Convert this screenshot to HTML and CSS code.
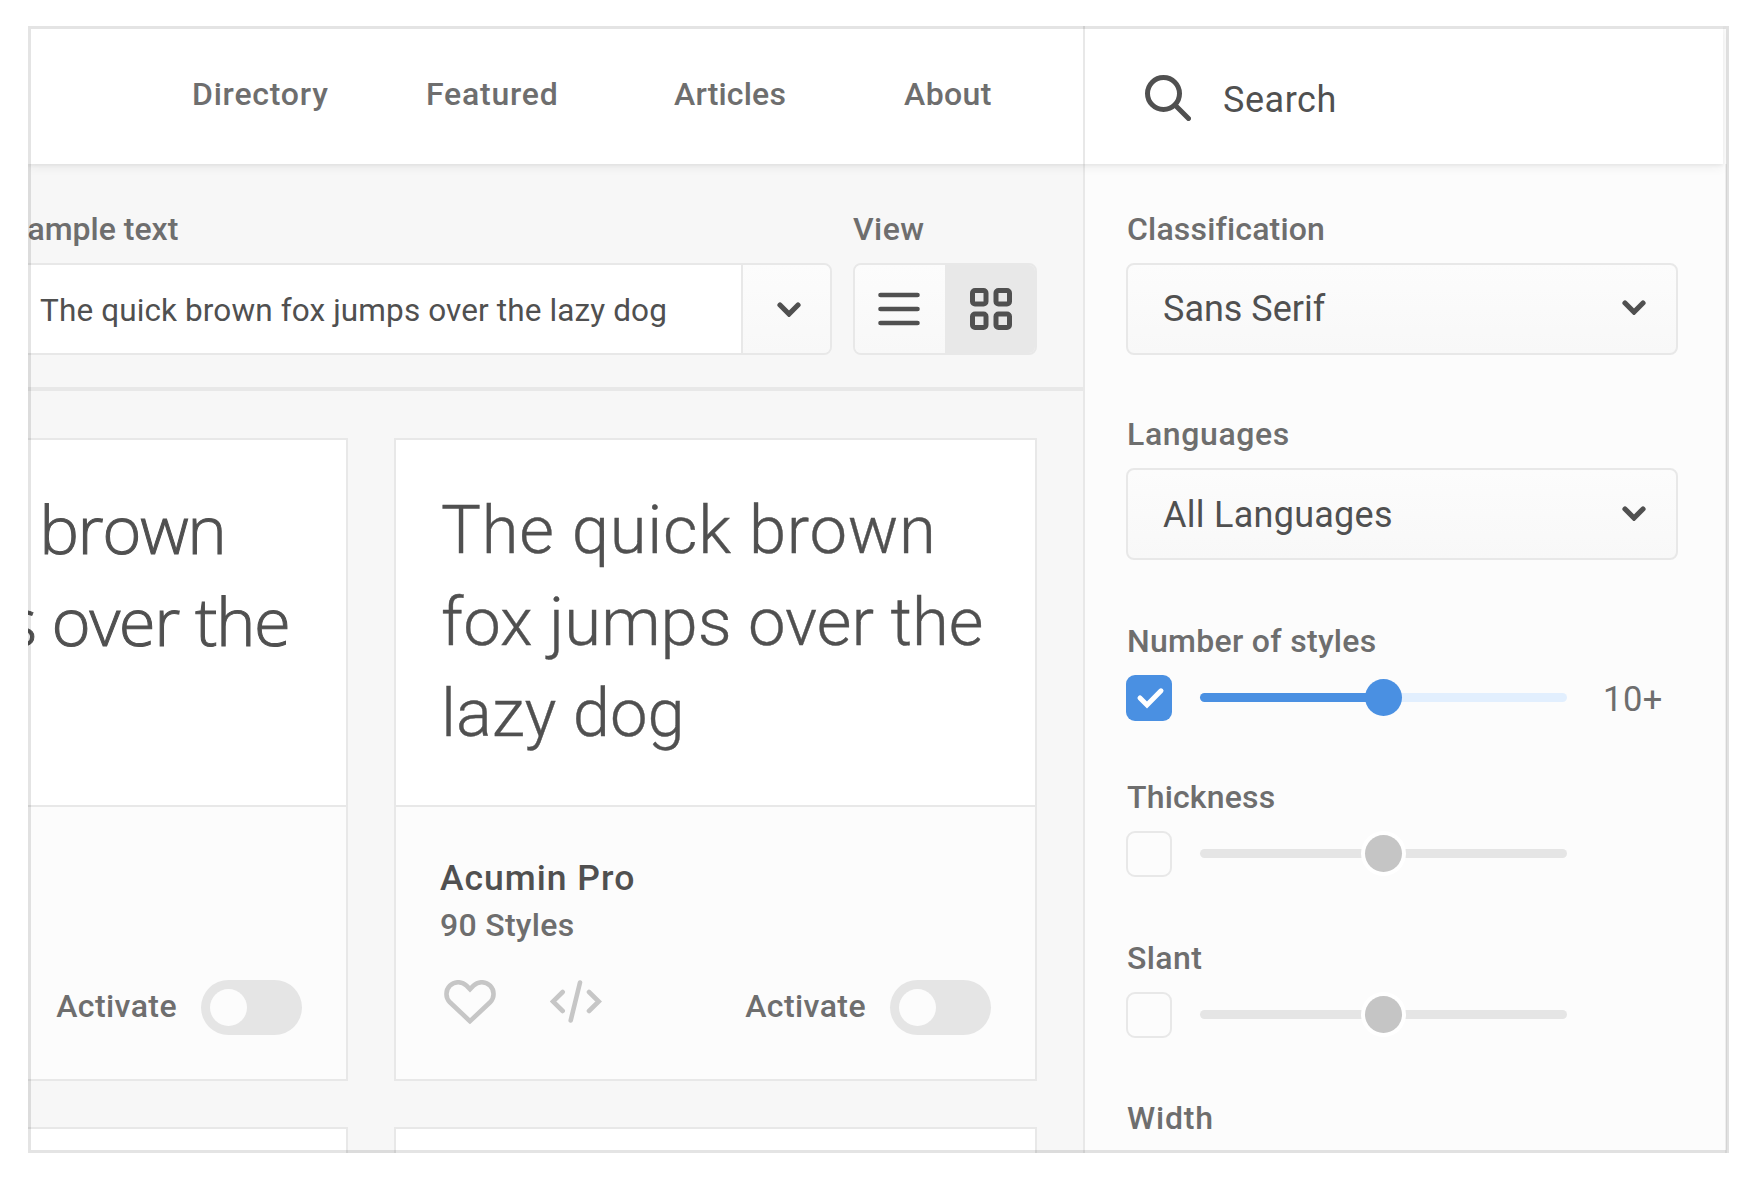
FILE: index.html
```html
<!DOCTYPE html>
<html lang="en">
<head>
<meta charset="utf-8">
<title>Font directory</title>
<link rel="stylesheet" href="styles.css">
</head>
<body>
<div class="frame">
  <header class="header">
    <nav class="nav">
      <a class="label ls-8">Directory</a>
      <a class="label ls-8">Featured</a>
      <a class="label ls-2">Articles</a>
      <a class="label ls-4">About</a>
    </nav>
    <div class="search">
      <svg class="search-icon" viewBox="0 0 46 46"><circle cx="18.5" cy="18.5" r="16"/><path d="M30 30L43.5 43.5"/></svg>
      <span class="search-text">Search</span>
    </div>
  </header>

  <div class="body">
    <main class="main">
      <div class="toolbar">
        <div class="sample-group">
          <div class="label">Sample text</div>
          <div class="sample-input">
            <div class="sample-value">The quick brown fox jumps over the lazy dog</div>
            <div class="sample-drop"><svg class="chevron" viewBox="0 0 24 15"><path d="M3 3L12 12L21 3"/></svg></div>
          </div>
        </div>
        <div class="view-group">
          <div class="label ls-4">View</div>
          <div class="view-toggle">
            <div class="view-list"><svg class="list-icon" viewBox="0 0 42 34"><path d="M2.5 3H39.500M2.500 17H39.500M2.500 31H39.500"/></svg></div>
            <div class="view-grid"><svg class="grid-icon" viewBox="0 0 42 42"><rect x="2.500" y="2.500" width="13.500" height="13.500" rx="2.500"/><rect x="26" y="2.500" width="13.500" height="13.500" rx="2.500"/><rect x="2.500" y="26" width="13.500" height="13.500" rx="2.500"/><rect x="26" y="26" width="13.500" height="13.500" rx="2.500"/></svg></div>
          </div>
        </div>
      </div>

      <div class="cards">
        <article class="card">
          <div class="card-sample humanist"><div>The quick brown</div><div>fox jumps over the</div><div>lazy dog</div></div>
          <div class="card-info">
            <div class="card-actions">
              <span class="label ls-4 activate">Activate</span>
              <span class="switch"></span>
            </div>
          </div>
        </article>
        <article class="card">
          <div class="card-sample"><div class="wide">The quick brown</div><div>fox jumps over the</div><div>lazy dog</div></div>
          <div class="card-info">
            <div class="card-name">Acumin Pro</div>
            <div class="label ls-3 card-count">90 Styles</div>
            <div class="card-actions">
              <svg class="heart" viewBox="0 0 52 46"><path d="M26 41.200L5.900 22.300A11.700 11.700 0 0 1 22.500 5.700L26 9.200L29.500 5.700A11.700 11.700 0 0 1 46.100 22.300Z"/></svg>
              <svg class="code" viewBox="0 0 52 44"><path d="M12.700 12L3 21.500L12.700 31M30 2.500L20.700 40.500M39 12L48.700 21.500L39 31"/></svg>
              <span class="label ls-4 activate">Activate</span>
              <span class="switch"></span>
            </div>
          </div>
        </article>
        <article class="card"></article>
        <article class="card"></article>
      </div>
    </main>

    <aside class="filters">
      <section class="field">
        <div class="label ls-2">Classification</div>
        <div class="select">Sans Serif<svg class="chevron" viewBox="0 0 24 15"><path d="M3 3L12 12L21 3"/></svg></div>
      </section>
      <section class="field field-languages">
        <div class="label ls-6">Languages</div>
        <div class="select">All Languages<svg class="chevron" viewBox="0 0 24 15"><path d="M3 3L12 12L21 3"/></svg></div>
      </section>
      <section class="range range-styles">
        <div class="label ls-3">Number of styles</div>
        <div class="range-row">
          <span class="check checked"><svg viewBox="0 0 46 46"><path d="M14 23L21 30L35 15.800"/></svg></span>
          <span class="track active"><span class="knob"></span></span>
          <span class="range-value">10+</span>
        </div>
      </section>
      <section class="range range-thickness">
        <div class="label ls-2">Thickness</div>
        <div class="range-row"><span class="check"></span><span class="track"><span class="knob"></span></span></div>
      </section>
      <section class="range range-slant">
        <div class="label ls-4">Slant</div>
        <div class="range-row"><span class="check"></span><span class="track"><span class="knob"></span></span></div>
      </section>
      <section class="range range-width">
        <div class="label ls-8">Width</div>
      </section>
    </aside>
  </div>
</div>
</body>
</html>
```
FILE: styles.css
```css
* { box-sizing: border-box; }
body { margin: 0; background: #fff; font-family: Roboto, sans-serif; color: #505050; overflow: hidden; }
svg { display: block; fill: none; stroke: #505050; stroke-linecap: round; flex: none; }

.frame { position: relative; width: 1701px; height: 1127px; margin: 26px 0 0 28px; overflow: hidden; background: #fcfcfc; white-space: nowrap; }
.frame::after { content: ""; position: absolute; inset: 0; z-index: 5; border: 3px solid rgba(0, 0, 0, 0.105); }

.label { height: 40px; font-size: 32px; line-height: 40px; font-weight: 500; color: #6e6e6e; }
.ls-2 { letter-spacing: 0.18px; }
.ls-3 { letter-spacing: 0.3px; }
.ls-4 { letter-spacing: 0.42px; }
.ls-6 { letter-spacing: 0.62px; }
.ls-8 { letter-spacing: 0.78px; }

.header { position: relative; z-index: 1; display: flex; width: 1695px; height: 138px; background: #fff; box-shadow: 0 2px 3px rgba(0, 0, 0, 0.05), 0 4px 10px rgba(0, 0, 0, 0.05); }
.nav { display: grid; grid-template-columns: 234px 248px 230px auto; width: 1055px; padding: 48px 0 0 164px; }
.search { display: flex; align-items: flex-start; flex: 1; padding: 49px 0 0 60px; border-left: 2px solid #e8e8e8; }
.search-icon { width: 46px; height: 46px; stroke-width: 5; }
.search-text { margin: 5px 0 0 32px; font-size: 36px; line-height: 40px; letter-spacing: 0.55px; }

.body { display: flex; height: 989px; }
.main { width: 1055px; flex: none; background: #f7f7f7; overflow: hidden; }

.toolbar { display: flex; gap: 21px; padding: 45px 0 32px; border-bottom: 4px solid #e8e8e8; }
.sample-group { flex: none; width: 824px; margin-left: -20px; }
.sample-input, .view-toggle { display: flex; height: 92px; margin-top: 14px; border: 2px solid #e8e8e8; border-radius: 8px; overflow: hidden; }
.sample-value { flex: 1; padding: 25px 0 0 30px; font-size: 31.5px; line-height: 41px; letter-spacing: 0.12px; background: #fff; }
.sample-drop { width: 89px; padding: 37px 0 0 34px; border-left: 2px solid #e8e8e8; background: linear-gradient(#fcfcfc, #f8f8f8); }
.chevron { width: 24px; height: 15px; stroke-width: 5.2; stroke-linejoin: miter; }
.view-group { width: 184px; }
.view-toggle > div { flex: 1; display: flex; align-items: center; justify-content: center; }
.view-list { padding-right: 2px; background: linear-gradient(#fcfcfc, #f8f8f8); }
.view-grid { padding-left: 2px; background: #e8e8e8; }
.list-icon { width: 42px; height: 34px; stroke-width: 4.6; }
.grid-icon { width: 42px; height: 42px; stroke-width: 5; }

.cards { display: grid; grid-template-columns: 643px 643px; grid-auto-rows: 643px; gap: 46px; margin: 47px 0 0 -323px; }
.card { border: 2px solid #e8e8e8; background: #fff; }
.card-sample { height: 367px; padding: 45px 0 0 45px; border-bottom: 2px solid #e8e8e8; font-size: 67px; line-height: 91.7px; font-weight: 300; -webkit-text-stroke: 0.4px #505050; }
.wide { letter-spacing: 0.72px; }
.humanist { padding: 43px 0 0 46px; font-family: "Open Sans", "Noto Sans", sans-serif; letter-spacing: -1.4px; -webkit-text-stroke-width: 1px; }
.humanist div:first-child { margin-left: -5px; }
.card-info { display: flex; flex-direction: column; justify-content: flex-end; height: 272px; padding: 0 44px 44px 44px; background: #fcfcfc; }
.card-name { font-size: 35.5px; line-height: 40px; font-weight: 500; letter-spacing: 1px; }
.card-count { margin: 7px 0 35px; }
.card-actions { display: flex; align-items: flex-start; height: 55px; }
.card-actions svg { stroke: #c6c6c6; stroke-width: 4.6; }
.heart { width: 52px; height: 46px; margin: 0 0 0 4px; }
.code { width: 52px; height: 44px; margin: 0 0 0 54px; }
.activate { margin: 6px 24px 0 auto; }
.switch { width: 101px; height: 55px; padding: 9px; border-radius: 28px; background: #e5e5e5; }
.switch::before { content: ""; display: block; width: 37px; height: 37px; border-radius: 50%; background: #fcfcfc; }

.filters { flex: none; width: 644px; padding: 45px 0 0 41px; border-left: 2px solid #e8e8e8; border-right: 2px solid #eee; background: #fcfcfc; }
.filters .label { padding-left: 1px; }
.field-languages { margin-top: 59px; }
.select { display: flex; justify-content: space-between; width: 552px; height: 92px; margin-top: 14px; padding: 22px 30px 0 35px; border: 2px solid #e8e8e8; border-radius: 8px; background: linear-gradient(#fcfcfc, #f8f8f8); font-size: 36px; line-height: 44px; }
.select .chevron { margin-top: 13px; }
.field-languages .select { padding-top: 23px; letter-spacing: 0.27px; }
.range-row { display: flex; align-items: center; height: 47px; margin-top: 13px; }
.range-styles { margin-top: 61px; }
.range-thickness { margin-top: 56px; }
.range-slant { margin-top: 61px; }
.range-width { margin-top: 60px; }
.check { flex: none; width: 46px; height: 46px; border: 2px solid #e8e8e8; border-radius: 9px; }
.checked { border: 0; background: #4a90e2; }
.checked svg { stroke: #fff; stroke-width: 5; }
.track { flex: none; width: 367px; height: 9px; margin-left: 28px; border-radius: 5px; background: #e5e5e5; display: flex; align-items: center; justify-content: center; }
.active { background: linear-gradient(90deg, #4a90e2 50%, #e2effe 50%); }
.knob { flex: none; width: 37px; height: 37px; border-radius: 50%; background: #c5c5c5; box-shadow: 0 0 0 4px #fff; }
.active .knob { background: #4a90e2; box-shadow: none; }
.range-value { margin: 3px 0 0 36px; font-size: 34.5px; line-height: 40px; letter-spacing: 0.5px; color: #6e6e6e; }
```
